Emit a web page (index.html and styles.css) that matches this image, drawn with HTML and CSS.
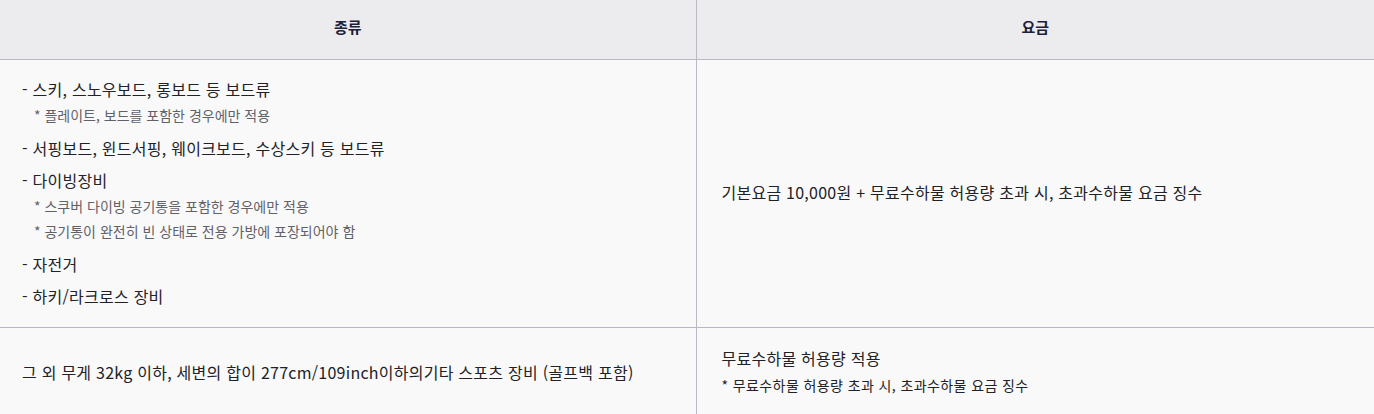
FILE: index.html
```html
<!DOCTYPE html>
<html lang="ko">
<head>
<meta charset="utf-8">
<title>요금</title>
<link rel="stylesheet" href="styles.css">
</head>
<body>
<table class="fee-table">
  <colgroup>
    <col class="col-kind">
    <col class="col-fee">
  </colgroup>
  <thead>
    <tr>
      <th>종류</th>
      <th>요금</th>
    </tr>
  </thead>
  <tbody>
    <tr class="row-main">
      <td>
        <ul class="items">
          <li>
            <span class="main">- 스키, 스노우보드, 롱보드 등 보드류</span>
            <ul class="notes">
              <li>* 플레이트, 보드를 포함한 경우에만 적용</li>
            </ul>
          </li>
          <li><span class="main">- 서핑보드, 윈드서핑, 웨이크보드, 수상스키 등 보드류</span></li>
          <li>
            <span class="main">- 다이빙장비</span>
            <ul class="notes">
              <li>* 스쿠버 다이빙 공기통을 포함한 경우에만 적용</li>
              <li>* 공기통이 완전히 빈 상태로 전용 가방에 포장되어야 함</li>
            </ul>
          </li>
          <li><span class="main">- 자전거</span></li>
          <li><span class="main">- 하키/라크로스 장비</span></li>
        </ul>
      </td>
      <td>기본요금 10,000원 + 무료수하물 허용량 초과 시, 초과수하물 요금 징수</td>
    </tr>
    <tr class="row-other">
      <td>그 외 무게 32kg 이하, 세변의 합이 277cm/109inch이하의기타 스포츠 장비 (골프백 포함)</td>
      <td>
        <p class="fee-line">무료수하물 허용량 적용</p>
        <p class="fee-note">* 무료수하물 허용량 초과 시, 초과수하물 요금 징수</p>
      </td>
    </tr>
  </tbody>
</table>
</body>
</html>
```

FILE: styles.css
```css
html, body {
  margin: 0;
  padding: 0;
  background: #f9f9fa;
}

body {
  font-family: "Noto Sans CJK KR", "Noto Sans", sans-serif;
  color: #222226;
  width: 1374px;
  overflow: hidden;
}

.fee-table {
  width: 1374px;
  border-collapse: collapse;
  table-layout: fixed;
}

.col-kind {
  width: 696px;
}

.fee-table th {
  height: 59px;
  padding: 0 0 6px;
  box-sizing: border-box;
  background: #ececee;
  color: #1c2138;
  font-size: 15px;
  font-weight: 700;
  text-align: center;
  vertical-align: middle;
  border-bottom: 1px solid #b9b9c4;
  border-left: 1px solid #b9b9c4;
}

.fee-table th:first-child,
.fee-table td:first-child {
  border-left: none;
}

.fee-table td {
  background: #f9f9fa;
  font-size: 16px;
  line-height: 24px;
  letter-spacing: 0.25px;
  text-align: left;
  vertical-align: middle;
  border-left: 1px solid #b9b9c4;
  border-bottom: 1px solid #b9b9c4;
  padding: 17px 22px 19px 22px;
}

.fee-table td + td {
  padding-left: 25px;
}

.items {
  list-style: none;
  margin: 0;
  padding: 0;
}

.items > li + li {
  margin-top: 8px;
}

.main {
  display: block;
  line-height: 24px;
}

.notes {
  list-style: none;
  margin: 2px 0 0;
  padding: 0 0 0 12px;
}

.notes li {
  font-size: 14px;
  line-height: 25px;
  color: #616168;
  letter-spacing: 0;
}

.row-other td {
  padding-top: 18px;
  padding-bottom: 18px;
  height: 52px;
}

.fee-line {
  margin: 0;
  line-height: 24px;
}

.fee-note {
  margin: 3px 0 0;
  font-size: 14px;
  line-height: 24px;
  letter-spacing: 0.4px;
  color: #222226;
}
```
